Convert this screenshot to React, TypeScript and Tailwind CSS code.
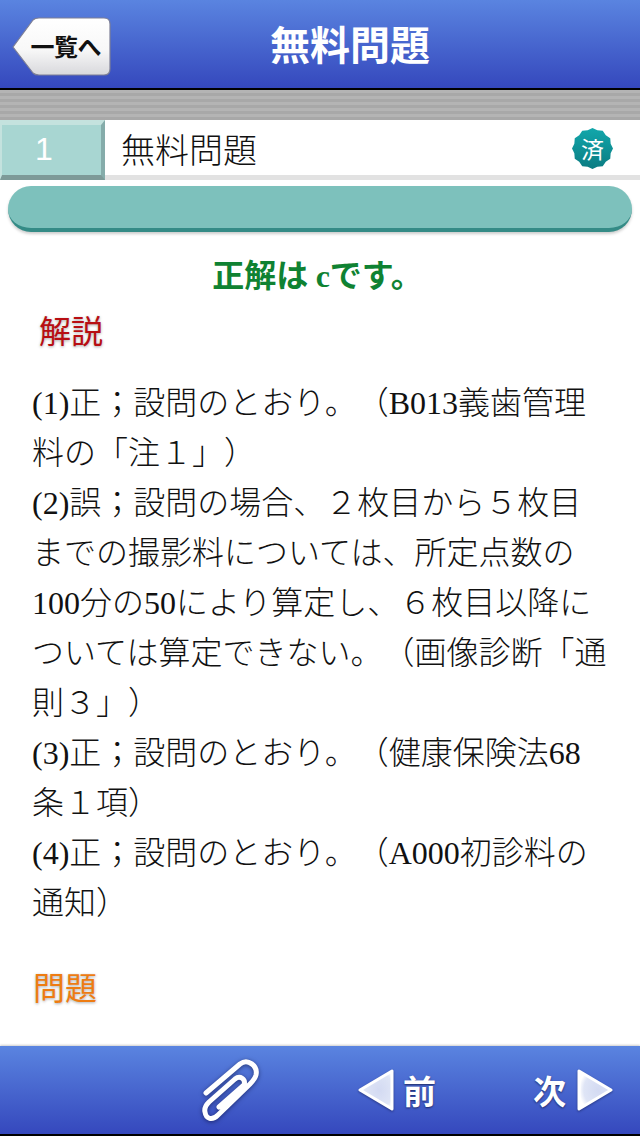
const sans = "font-['Noto_Sans_CJK_JP',sans-serif]";

function BackButton() {
  return (
    <button className="relative mt-[5px] ml-[12px] flex h-[60px] w-[100px] items-center justify-end pr-[11px] pb-[2px]">
      <svg className="absolute inset-0" width="100" height="60" viewBox="0 0 100 60">
        <defs>
          <linearGradient id="bb" x1="0" y1="0" x2="0" y2="1">
            <stop offset="0" stopColor="#ffffff" />
            <stop offset="0.55" stopColor="#f8f8f8" />
            <stop offset="1" stopColor="#d8d8dc" />
          </linearGradient>
        </defs>
        <path
          d="M1 30 L21 3 Q23 1 27 1 L92 1 Q98 1 98 7 L98 52 Q98 58 92 58 L27 58 Q23 58 21 56 Z"
          fill="url(#bb)"
          stroke="#7d7f95"
          strokeWidth="1.2"
          strokeLinejoin="round"
        />
      </svg>
      <span className={`relative text-[24px] leading-none font-bold tracking-[-0.5px] text-[#111] ${sans}`}>一覧へ</span>
    </button>
  );
}

function Badge() {
  const pts: string[] = [];
  for (let i = 0; i < 24; i++) {
    const r = i % 2 === 0 ? 20.5 : 18.8;
    const a = (i * Math.PI) / 12;
    pts.push(`${20.5 + r * Math.sin(a)},${20.5 - r * Math.cos(a)}`);
  }
  return (
    <div className="relative flex h-[41px] w-[41px] items-center justify-center">
      <svg className="absolute inset-0" width="41" height="41" viewBox="0 0 41 41">
        <defs>
          <linearGradient id="bd" x1="0" y1="0" x2="0" y2="1">
            <stop offset="0" stopColor="#12a7ab" />
            <stop offset="1" stopColor="#0b7c82" />
          </linearGradient>
        </defs>
        <polygon points={pts.join(" ")} fill="url(#bd)" strokeLinejoin="round" />
      </svg>
      <span className={`relative text-[23px] leading-none text-white ${sans}`}>済</span>
    </div>
  );
}

function Clip() {
  return (
    <svg width="64" height="68" viewBox="200 1056 64 68" className="drop-shadow-[0_1px_2px_rgba(0,0,30,0.5)]">
      <path
        d="M206 1093 L240 1064 C248 1058 258 1066 256 1075 C255 1079 253 1081 250 1084 L218 1115 C212 1121 206 1119 205 1112 C204 1108 206 1105 209 1102 L235 1079 C240 1075 246 1079 244 1085 L219 1107"
        fill="none"
        stroke="#ffffff"
        strokeWidth="5"
        strokeLinecap="round"
        strokeLinejoin="round"
      />
    </svg>
  );
}

function Arrow({ dir }: { dir: "l" | "r" }) {
  return (
    <svg width="38" height="44" viewBox="0 0 38 44" className="drop-shadow-[0_1px_1px_rgba(0,0,30,0.4)]">
      <defs>
        <radialGradient id={`a${dir}`} cx="0.6" cy="0.5" r="0.6">
          <stop offset="0" stopColor="#d3daf2" />
          <stop offset="0.75" stopColor="#dfe5f6" />
          <stop offset="1" stopColor="#ffffff" />
        </radialGradient>
      </defs>
      <path
        d={dir === "l" ? "M3 22 L35 3 L35 41 Z" : "M35 22 L3 3 L3 41 Z"}
        fill={`url(#a${dir})`}
        stroke="#ffffff"
        strokeWidth="3"
        strokeLinejoin="round"
      />
    </svg>
  );
}

const lines = [
  "(1)正；設問のとおり。（B013義歯管理",
  "料の「注１」）",
  "(2)誤；設問の場合、２枚目から５枚目",
  "までの撮影料については、所定点数の",
  "100分の50により算定し、６枚目以降に",
  "ついては算定できない。（画像診断「通",
  "則３」）",
  "(3)正；設問のとおり。（健康保険法68",
  "条１項）",
  "(4)正；設問のとおり。（A000初診料の",
  "通知）",
];

export default function App() {
  return (
    <div className={`flex h-[1136px] w-[640px] flex-col overflow-hidden bg-white ${sans}`}>
      <header className="flex h-[88px] shrink-0 items-center bg-[linear-gradient(#5a84e0,#3548bd)]">
        <div className="relative flex h-full w-full items-center">
          <BackButton />
          <h1 className="absolute left-[110px] right-[50px] -mt-[2px] text-center text-[40px] leading-none font-bold text-white">
            無料問題
          </h1>
        </div>
      </header>
      <div className="h-[2px] shrink-0 bg-black" />
      <div className="h-[30px] shrink-0 bg-[repeating-linear-gradient(#b4b4b4_0px,#b4b4b4_3px,#a8a8a8_3px,#a8a8a8_6px)]" />

      <div className="flex h-[60px] shrink-0 border-b-[5px] border-[#e2e2e2]">
        <div className="-mb-[5px] flex h-[60px] w-[105px] items-center justify-center border-t-[5px] border-r-[4px] border-b-[5px] border-l-[2px] border-t-[#c4e2de] border-r-[#85acaa] border-b-[#7d9a98] border-l-[#c4e2de] bg-[#a8d6d2] pr-[15px] pb-[2px]">
          <span className="font-['Liberation_Sans',sans-serif] text-[32px] leading-none text-white">1</span>
        </div>
        <div className="flex flex-1 items-center justify-between pt-[2px] pr-[27px] pl-[16px]">
          <span className="text-[34px] leading-none font-light text-[#111]">無料問題</span>
          <Badge />
        </div>
      </div>

      <div className="mx-[8px] mt-[6px] h-[46px] shrink-0 rounded-[23px] border-b-[4px] border-[#348b86] bg-[#7dc1bc] shadow-[0_2px_3px_rgba(0,0,0,0.2)]" />

      <main className="min-h-0 flex-1 overflow-hidden">
        <p className="mt-[21px] pr-[5px] text-center text-[32px] leading-[40px] font-bold text-[#0f8232]">
          正解は <span className="font-['Liberation_Serif',serif]">c</span>です。
        </p>
        <h2 className="mt-[13px] ml-[39px] text-[32px] leading-[40px] text-[#b80e12] [text-shadow:0_1px_3px_rgba(0,0,0,0.35)]">
          解説
        </h2>
        <div className="mt-[29px] ml-[32px] font-['Liberation_Serif','Noto_Sans_CJK_JP',sans-serif] text-[32px] leading-[50px] font-light whitespace-nowrap text-[#111] [text-spacing-trim:space-all]">
          {lines.map((l) => (
            <div key={l}>{l}</div>
          ))}
        </div>
        <h2 className="mt-[38px] ml-[33px] text-[32px] leading-[40px] text-[#ee7c12] [text-shadow:0_1px_3px_rgba(0,0,0,0.35)]">
          問題
        </h2>
      </main>

      <footer className="relative flex h-[88px] shrink-0 items-center justify-end bg-[linear-gradient(#5a84e0,#3548bd)] pr-[26px] shadow-[0_-1px_2px_rgba(0,0,0,0.2)]">
        <div className="mr-[93px]">
          <Clip />
        </div>
        <div className="mr-[97px] flex items-center gap-[8px]">
          <Arrow dir="l" />
          <span className="text-[33px] leading-none font-bold text-white [text-shadow:0_1px_2px_rgba(0,0,30,0.6)]">前</span>
        </div>
        <div className="flex items-center gap-[10px]">
          <span className="text-[33px] leading-none font-bold text-white [text-shadow:0_1px_2px_rgba(0,0,30,0.6)]">次</span>
          <Arrow dir="r" />
        </div>
      </footer>
      <div className="h-[2px] shrink-0 bg-black" />
    </div>
  );
}
